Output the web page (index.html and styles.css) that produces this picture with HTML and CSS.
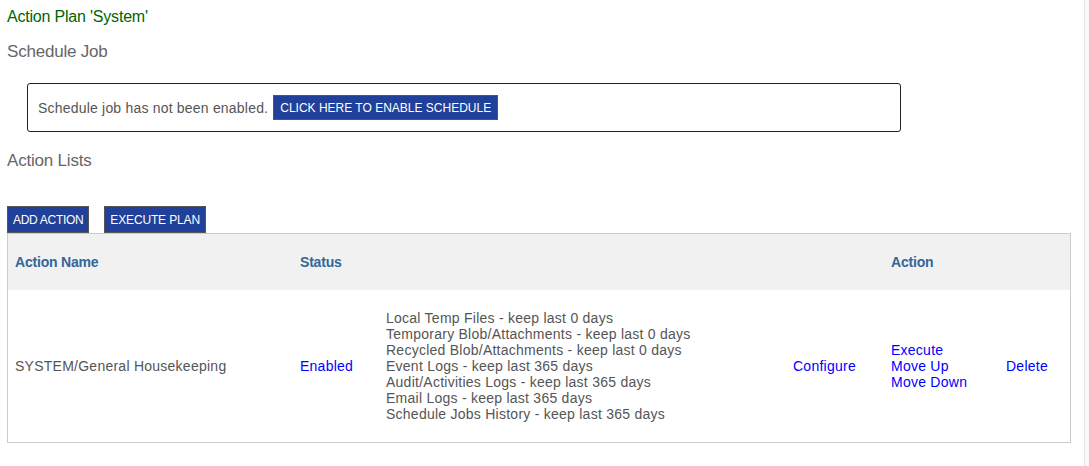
FILE: index.html
```html
<!DOCTYPE html>
<html>
<head>
<meta charset="utf-8">
<link rel="stylesheet" href="styles.css">
</head>
<body>
<div class="page">
  <div class="title">Action Plan 'System'</div>
  <h2 class="section">Schedule Job</h2>
  <div class="schedule-box">
    <span class="muted">Schedule job has not been enabled.</span>
    <button class="btn btn-sched">CLICK HERE TO ENABLE SCHEDULE</button>
  </div>
  <h2 class="section section-lists">Action Lists</h2>
  <div class="toolbar">
    <button class="btn btn-tight">ADD ACTION</button>
    <button class="btn">EXECUTE PLAN</button>
  </div>
  <table class="grid">
    <thead>
      <tr>
        <th class="c-name">Action Name</th>
        <th class="c-status">Status</th>
        <th class="c-desc"></th>
        <th class="c-conf"></th>
        <th class="c-act">Action</th>
        <th class="c-del"></th>
      </tr>
    </thead>
    <tbody>
      <tr>
        <td class="c-name">SYSTEM/General Housekeeping</td>
        <td class="c-status"><a class="link">Enabled</a></td>
        <td class="c-desc">
          <div>Local Temp Files - keep last 0 days</div>
          <div>Temporary Blob/Attachments - keep last 0 days</div>
          <div>Recycled Blob/Attachments - keep last 0 days</div>
          <div>Event Logs - keep last 365 days</div>
          <div>Audit/Activities Logs - keep last 365 days</div>
          <div>Email Logs - keep last 365 days</div>
          <div>Schedule Jobs History - keep last 365 days</div>
        </td>
        <td class="c-conf"><a class="link">Configure</a></td>
        <td class="c-act">
          <div><a class="link">Execute</a></div>
          <div><a class="link">Move Up</a></div>
          <div><a class="link">Move Down</a></div>
        </td>
        <td class="c-del"><a class="link">Delete</a></td>
      </tr>
    </tbody>
  </table>
</div>
</body>
</html>
```

FILE: styles.css
```css
html, body {
  margin: 0;
  padding: 0;
  background: #f9f9f9;
}
body {
  font-family: "Liberation Sans", Arial, sans-serif;
  color: #555;
}
.page {
  width: 1085px;
  height: 466px;
  background: #fff;
  border-right: 1px solid #e4e4e4;
  box-sizing: border-box;
  padding: 8px 0 0 7px;
}
.title {
  color: #006400;
  font-size: 16px;
  line-height: 18px;
  letter-spacing: -0.2px;
}
.section {
  margin: 0;
  font-size: 17px;
  font-weight: normal;
  color: #666;
  line-height: 20px;
  margin-top: 16px;
  letter-spacing: -0.2px;
}
.section-lists {
  margin-top: 19px;
}
.schedule-box {
  margin: 21px 0 0 20px;
  width: 874px;
  height: 49px;
  box-sizing: border-box;
  border: 1px solid #222;
  border-radius: 3px;
  display: flex;
  align-items: center;
  padding-left: 10px;
  font-size: 14px;
  letter-spacing: 0.2px;
}
.muted {
  color: #555;
  margin-right: 5px;
}
.btn {
  font-family: "Liberation Sans", Arial, sans-serif;
  background: #21409a;
  color: #fff;
  border: 1px solid #555;
  font-size: 12px;
  letter-spacing: -0.15px;
  padding: 0 5px;
  height: 27px;
  margin: 0;
  cursor: pointer;
}
.btn-tight {
  letter-spacing: -0.3px;
}
.btn-sched {
  height: 25px;
  padding: 0 6px;
  letter-spacing: 0;
}
.toolbar {
  margin-top: 35px;
  display: flex;
  gap: 15px;
  height: 27px;
}
.grid {
  width: 1064px;
  border-collapse: collapse;
  border: 1px solid #ccc;
  font-size: 14px;
  letter-spacing: 0.25px;
}
.grid th {
  background: #f1f1f1;
  color: #336699;
  font-weight: bold;
  text-align: left;
  height: 56px;
  padding: 0 0 0 7px;
  vertical-align: middle;
  letter-spacing: -0.2px;
}
.grid td {
  height: 152px;
  padding: 0 0 0 7px;
  vertical-align: middle;
  line-height: 16px;
  color: #555;
}
.c-name { width: 278px; }
.c-status { width: 79px; }
.c-desc { width: 400px; }
.c-conf { width: 91px; }
.c-act { width: 108px; }
.link {
  color: #0000ff;
  text-decoration: none;
  cursor: pointer;
}
```
